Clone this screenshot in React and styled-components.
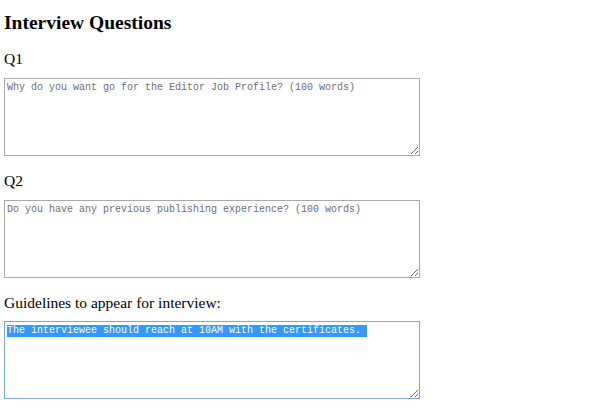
import React, { useEffect, useRef } from 'react';
import styled, { createGlobalStyle } from 'styled-components';

const GlobalStyle = createGlobalStyle`
  html, body {
    margin: 0;
    padding: 0;
    background: #ffffff;
  }
`;

const Page = styled.div`
  display: flex;
  flex-direction: column;
  padding: 11px 0 0 4px;
  font-family: 'Liberation Serif', 'Times New Roman', serif;
  color: #000000;
`;

const Title = styled.h2`
  margin: 0 0 16px;
  font-size: 19.5px;
  line-height: 23px;
  font-weight: bold;
`;

const Label = styled.label`
  display: block;
  font-size: 15.5px;
  line-height: 18px;
  margin: 0 0 ${(p) => p.gap || 10}px;
`;

const Field = styled.textarea`
  box-sizing: border-box;
  display: block;
  width: 416px;
  height: 78px;
  margin: 0 0 ${(p) => p.after ?? 16}px;
  padding: 3px 2px 2px;
  border: 1px solid ${(p) => (p.active ? '#7fa6d4' : '#a9a9a9')};
  font-family: 'Liberation Mono', Consolas, monospace;
  font-size: 10px;
  line-height: 12px;
  color: #000000;
  background: #ffffff;
  outline: none;

  &::placeholder {
    color: #6e6e6e;
    opacity: 1;
  }

  &::selection {
    background: #3399ff;
    color: #ffffff;
  }
`;

const App = () => {
  const guideRef = useRef(null);

  useEffect(() => {
    if (guideRef.current) {
      guideRef.current.focus();
      guideRef.current.select();
    }
  }, []);

  return (
    <>
      <GlobalStyle />
      <Page>
        <Title>Interview Questions</Title>

        <Label htmlFor="q1">Q1</Label>
        <Field id="q1" placeholder="Why do you want go for the Editor Job Profile? (100 words)" />

        <Label htmlFor="q2" gap={10}>Q2</Label>
        <Field id="q2" placeholder="Do you have any previous publishing experience? (100 words)" />

        <Label htmlFor="guide" gap={9}>Guidelines to appear for interview:</Label>
        <Field
          id="guide"
          ref={guideRef}
          active
          after={0}
          defaultValue={'The interviewee should reach at 10AM with the certificates.\n'}
        />
      </Page>
    </>
  );
};

export default App;
